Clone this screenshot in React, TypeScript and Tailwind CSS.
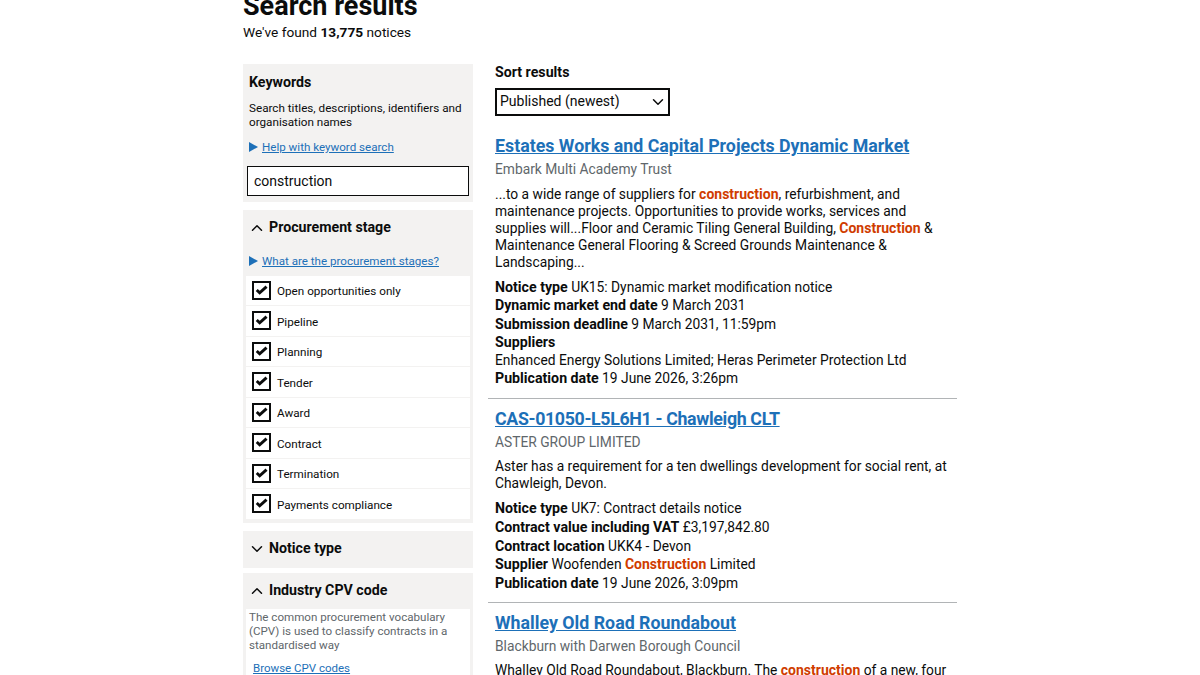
import { ChevronDown, ChevronUp } from "lucide-react";

const stages = [
  "Open opportunities only",
  "Pipeline",
  "Planning",
  "Tender",
  "Award",
  "Contract",
  "Termination",
  "Payments compliance",
];

function Hit({ children }: { children: React.ReactNode }) {
  return <strong className="text-[14px] font-bold text-[#d03c00]">{children}</strong>;
}

function Help({ children }: { children: React.ReactNode }) {
  return (
    <div className="flex items-center h-[20px] pl-[6px]">
      <span className="w-0 h-0 mr-[4px] -mt-[2px] border-y-[5px] border-y-transparent border-l-[9px] border-l-[#1d70b8]" />
      <a href="#" className="text-[11.6px] text-[#1d70b8] underline">
        {children}
      </a>
    </div>
  );
}

function Check({ label }: { label: string }) {
  return (
    <div className="flex items-center h-[30.5px] bg-white border-b border-[#f3f2f1] pl-[6px]">
      <span className="flex items-center justify-center w-[19px] h-[19px] border-2 border-[#0b0c0c] mr-[6px]">
        <svg viewBox="0 0 14 12" className="w-[13px] h-[11px]">
          <path d="M1.8 5.5 L5 8.5 L12.5 1.8" fill="none" stroke="#0b0c0c" strokeWidth="3.2" />
        </svg>
      </span>
      <span className="text-[11.7px] text-[#0b0c0c] mt-[4px]">{label}</span>
    </div>
  );
}

function Row({ label, value }: { label: string; value: React.ReactNode }) {
  return (
    <p className="h-[18.6px]">
      <strong className="text-[14.2px] font-bold">{label}</strong> {value}
    </p>
  );
}

function SectionHead({ open, title }: { open: boolean; title: string }) {
  const Icon = open ? ChevronUp : ChevronDown;
  return (
    <div className="flex items-center h-[36px] pl-[2px] gap-[3px]">
      <Icon className="w-[18px] h-[18px]" strokeWidth={2} />
      <h2 className="text-[14.2px] font-bold">{title}</h2>
    </div>
  );
}

export default function App() {
  return (
    <div className="h-[675px] overflow-hidden bg-white text-[#0b0c0c] font-['Roboto',sans-serif]">
      <div className="w-[714px] ml-[243px] -mt-[10px]">
        <h1 className="text-[27px] leading-[32px] font-bold">Search results</h1>
        <p className="text-[13.7px] leading-[20px]">
          We've found <strong>13,775</strong> notices
        </p>

        <div className="flex mt-[22px]">
          <aside className="w-[230px] shrink-0">
            <div className="bg-[#f3f2f1] h-[138px] pt-[9px]">
              <h2 className="px-[6px] text-[14.2px] leading-[18px] font-bold">Keywords</h2>
              <p className="px-[6px] mt-[10px] text-[11.7px] leading-[14px]">
                Search titles, descriptions, identifiers and organisation names
              </p>
              <div className="mt-[9px]">
                <Help>Help with keyword search</Help>
              </div>
              <input
                readOnly
                value="construction"
                className="block mt-[8px] mx-[4px] w-[222px] h-[30px] px-[6px] bg-white border border-[#0b0c0c] text-[14px] outline-none"
              />
            </div>

            <div className="bg-[#f3f2f1] mt-[8px] px-[3px] pb-[3px]">
              <SectionHead open title="Procurement stage" />
              <div className="mt-[5.5px] mb-[4px] -ml-[3px]">
                <Help>What are the procurement stages?</Help>
              </div>
              {stages.map((s) => (
                <Check key={s} label={s} />
              ))}
            </div>

            <div className="bg-[#f3f2f1] mt-[8px] px-[3px] pb-[1px]">
              <SectionHead open={false} title="Notice type" />
            </div>

            <div className="bg-[#f3f2f1] mt-[5px] px-[3px]">
              <SectionHead open title="Industry CPV code" />
              <div className="bg-white px-[3px] pt-[1px] pb-[20px]">
                <p className="text-[11.6px] leading-[14px] text-[#5f676b]">
                  The common procurement vocabulary (CPV) is used to classify contracts in a standardised way
                </p>
                <a href="#" className="block mt-[8px] ml-[4px] text-[11.5px] text-[#1d70b8] underline">
                  Browse CPV codes
                </a>
              </div>
            </div>
          </aside>

          <main className="ml-[15px] flex-1 text-[13.8px]">
            <div className="px-[7px]">
              <h2 className="text-[14.2px] leading-[18px] font-bold -mt-[1px]">Sort results</h2>
              <div className="flex items-center justify-between mt-[6.5px] w-[175px] h-[28px] border-2 border-[#0b0c0c] pl-[3px] pr-[1px] text-[14px]">
                <span>Published (newest)</span>
                <ChevronDown className="w-[18px] h-[18px]" strokeWidth={2} />
              </div>
            </div>

            <article className="px-[7px] pt-[18.5px] pb-[10px] border-b border-[#b1b4b6]">
              <h3 className="text-[17.8px] leading-[24px] font-bold">
                <a href="#" className="text-[#1d70b8] underline">Estates Works and Capital Projects Dynamic Market</a>
              </h3>
              <p className="mt-[1.5px] leading-[18px] text-[#5f676b]">Embark Multi Academy Trust</p>
              <p className="mt-[8px] leading-[17px]">
                ...to a wide range of suppliers for <Hit>construction</Hit>, refurbishment, and maintenance projects. Opportunities to provide works, services and supplies will...Floor and Ceramic Tiling General Building, <Hit>Construction</Hit> &amp; Maintenance General Flooring &amp; Screed Grounds Maintenance &amp; Landscaping...
              </p>
              <div className="mt-[7px] leading-[18.6px]">
                <Row label="Notice type" value="UK15: Dynamic market modification notice" />
                <Row label="Dynamic market end date" value="9 March 2031" />
                <Row label="Submission deadline" value="9 March 2031, 11:59pm" />
                <p className="text-[14.2px] font-bold h-[17.5px]">Suppliers</p>
                <p className="h-[18.5px]">Enhanced Energy Solutions Limited; Heras Perimeter Protection Ltd</p>
                <Row label="Publication date" value="19 June 2026, 3:26pm" />
              </div>
            </article>

            <article className="px-[7px] pt-[8px] pb-[10px] border-b border-[#b1b4b6]">
              <h3 className="text-[17.8px] leading-[24px] font-bold tracking-[-0.35px]">
                <a href="#" className="text-[#1d70b8] underline">CAS-01050-L5L6H1 - Chawleigh CLT</a>
              </h3>
              <p className="mt-[2.5px] leading-[18px] text-[#5f676b]">ASTER GROUP LIMITED</p>
              <p className="mt-[7px] leading-[17px]">
                Aster has a requirement for a ten dwellings development for social rent, at Chawleigh, Devon.
              </p>
              <div className="mt-[7px] leading-[18.6px]">
                <Row label="Notice type" value="UK7: Contract details notice" />
                <Row label="Contract value including VAT" value="£3,197,842.80" />
                <Row label="Contract location" value="UKK4 - Devon" />
                <Row label="Supplier" value={<>Woofenden <Hit>Construction</Hit> Limited</>} />
                <Row label="Publication date" value="19 June 2026, 3:09pm" />
              </div>
            </article>

            <article className="px-[7px] pt-[8px]">
              <h3 className="text-[17.8px] leading-[24px] font-bold">
                <a href="#" className="text-[#1d70b8] underline">Whalley Old Road Roundabout</a>
              </h3>
              <p className="mt-[1.5px] leading-[18px] text-[#5f676b]">Blackburn with Darwen Borough Council</p>
              <p className="mt-[7px] leading-[17px]">
                Whalley Old Road Roundabout, Blackburn. The <Hit>construction</Hit> of a new, four
              </p>
            </article>
          </main>
        </div>
      </div>
    </div>
  );
}
